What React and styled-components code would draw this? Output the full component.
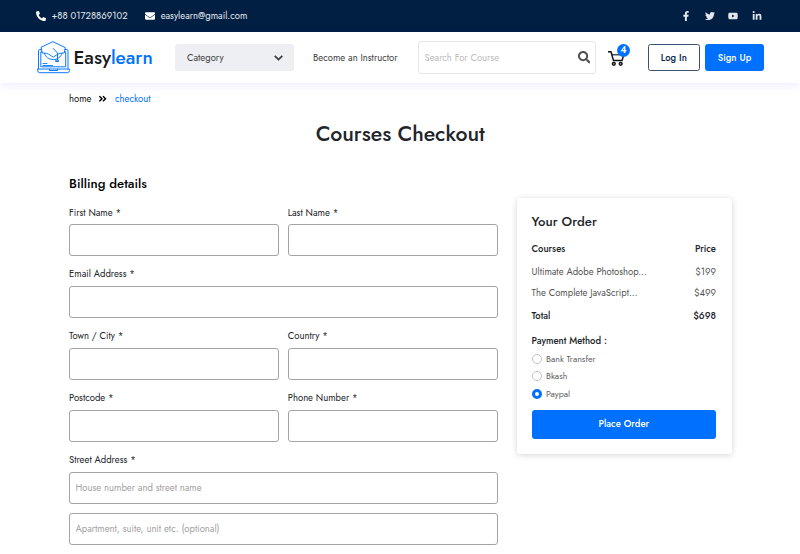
import React from 'react';
import styled, { createGlobalStyle } from 'styled-components';
import {
  FaPhoneAlt,
  FaEnvelope,
  FaFacebookF,
  FaTwitter,
  FaYoutube,
  FaLinkedinIn,
  FaAngleDoubleRight,
  FaSearch,
} from 'react-icons/fa';

const GlobalStyle = createGlobalStyle`
  * { box-sizing: border-box; }
  body {
    margin: 0;
    background: #fff;
    color: #212529;
    font: 400 9.5px/14px Jost, Lato, sans-serif;
    overflow: hidden;
  }
  input, button { font: inherit; }
`;

const Text = styled.span`
  white-space: nowrap;
`;

const TopBar = styled.div`
  height: 32px;
  padding: 0 38.5px 0 36px;
  background: #001f43;
  color: #e3e7ec;
  display: flex;
  align-items: center;
  justify-content: space-between;
`;

const Contacts = styled.div`
  display: flex;
  gap: 17.5px;
`;

const Contact = styled.div`
  display: flex;
  align-items: center;
  gap: 5.5px;
  svg { font-size: 10px; color: #fff; }
`;

const Socials = styled.div`
  display: flex;
  align-items: center;
  gap: 13.5px;
  font-size: 10px;
  svg { display: block; }
`;

const Navbar = styled.header`
  height: 51px;
  padding: 0 36px 0 37px;
  background: #fff;
  box-shadow: 0 3px 9px rgba(70, 90, 240, 0.09);
  display: flex;
  align-items: center;
`;

const Brand = styled.div`
  width: 138px;
  display: flex;
  align-items: center;
  gap: 3.5px;
  color: #17191c;
  font-size: 19px;
  font-weight: 500;
  line-height: 26px;
`;

const BrandName = styled.span`
  display: flex;
`;

const BrandAccent = styled(Text)`
  color: #0071ff;
`;

const CategorySelect = styled.div`
  width: 118.5px;
  height: 26.5px;
  padding: 0 11px 0 12px;
  border-radius: 2.5px;
  background: #eeeff3;
  color: #444;
  display: flex;
  align-items: center;
  justify-content: space-between;
`;

const NavLink = styled.a`
  width: 105px;
  margin-left: 19.5px;
  color: #3f3f3f;
  white-space: nowrap;
`;

const SearchBox = styled.div`
  width: 178px;
  height: 33px;
  padding: 0 5px 0 5.5px;
  border: 1px solid #e6e6e6;
  border-radius: 3px;
  display: flex;
  align-items: center;
  svg { font-size: 12.5px; color: #505050; }
`;

const SearchInput = styled.input`
  flex: 1;
  min-width: 0;
  padding: 0;
  border: 0;
  outline: 0;
  &::placeholder { color: #bcbcbc; }
`;

const CartButton = styled.div`
  position: relative;
  width: 22px;
  height: 24px;
  margin: 0 18px 0 12px;
  padding-top: 4px;
  svg { display: block; }
`;

const CartBadge = styled.span`
  position: absolute;
  top: -2px;
  right: 0;
  width: 13px;
  height: 13px;
  border-radius: 50%;
  background: #0071ff;
  color: #fff;
  font-size: 9.5px;
  font-weight: 600;
  line-height: 13px;
  text-align: center;
`;

const Button = styled.button`
  width: ${(p) => p.$width || '100%'};
  height: ${(p) => p.$height || '27.5px'};
  padding: 0;
  border: 1px solid ${(p) => (p.$outline ? '#3a5270' : '#0071ff')};
  border-radius: 2.5px;
  background: ${(p) => (p.$outline ? '#fff' : '#0071ff')};
  color: ${(p) => (p.$outline ? '#0b2849' : '#fff')};
  font-weight: 500;
`;

const AuthButtons = styled.div`
  display: flex;
  gap: 5.5px;
`;

const Page = styled.main`
  padding: 9px 68.5px 0 69px;
`;

const Breadcrumb = styled.nav`
  display: flex;
  align-items: center;
  color: #111;
  svg { margin: 0 7px; font-size: 9.5px; color: #000; }
`;

const Crumb = styled(Text)`
  color: ${(p) => (p.$active ? '#0071ff' : 'inherit')};
`;

const Title = styled.h1`
  margin: 13px 0 0;
  font-size: 21.3px;
  font-weight: 500;
  line-height: 30px;
  letter-spacing: -0.04px;
  text-align: center;
`;

const Columns = styled.div`
  margin-top: 25px;
  display: flex;
  align-items: flex-start;
  gap: 18.5px;
`;

const Form = styled.form`
  width: 429px;
`;

const Heading = styled.h2`
  margin: 0;
  font-size: 13.2px;
  font-weight: 500;
  line-height: 20px;
  color: #000;
`;

const OrderTitle = styled(Heading)`
  color: #212529;
`;

const FieldGrid = styled.div`
  margin-top: 11.5px;
  display: grid;
  grid-template-columns: 1fr 1fr;
  column-gap: 8.5px;
  row-gap: 11.1px;
`;

const Field = styled.label`
  grid-column: ${(p) => (p.$wide ? 'span 2' : 'auto')};
  display: flex;
  flex-direction: column;
`;

const Input = styled.input`
  height: 32px;
  margin-top: ${(p) => p.$gap || '4.8px'};
  padding: 0 5.5px;
  border: 1px solid #a3a3a3;
  border-radius: 3px;
  background: #fff;
  outline: 0;
  &::placeholder { color: #a2a2a2; }
`;

const OrderCard = styled.aside`
  width: 215px;
  height: 256px;
  margin-top: 24.3px;
  padding: 13.8px 15.5px 0 15px;
  border-radius: 3px;
  background: #fff;
  box-shadow: 0 1px 6px rgba(0, 0, 0, 0.17);
`;

const OrderRow = styled.div`
  height: ${(p) => p.$height}px;
  display: flex;
  align-items: center;
  justify-content: space-between;
  font-weight: ${(p) => (p.$strong ? 500 : 400)};
  color: ${(p) => (p.$strong ? '#212529' : '#555')};
`;

const PaymentTitle = styled.div`
  margin: 10px 0 2.3px;
  font-weight: 500;
  line-height: 14px;
`;

const Option = styled.label`
  height: 17.3px;
  display: flex;
  align-items: center;
  gap: 4.5px;
  color: #626262;
  font-size: 8.9px;
`;

const Radio = styled.input.attrs({ type: 'radio', name: 'payment' })`
  appearance: none;
  width: 10px;
  height: 10px;
  margin: 0;
  border: 1px solid #c4c4c4;
  border-radius: 50%;
  background: #fff;
  &:checked { border: 3px solid #0071ff; }
`;

const Submit = styled.div`
  margin-top: 7.4px;
`;

const LogoMark = () => (
  <svg width="33" height="33" viewBox="0 0 33 33" fill="none" stroke="#0b78ff" strokeWidth="1" strokeLinejoin="round" strokeLinecap="round">
    <path d="M4.200 8.500H2.800a1.300 1.300 0 0 0-1.300 1.300v18M28 8.500h1.700a1.300 1.300 0 0 1 1.300 1.300v18" />
    <path d="M5 10.800H3.800v15h24.900v-15h-1.200" />
    <path d="M.6 28h31.800v1.600a2.100 2.100 0 0 1-2.100 2.100H2.700A2.100 2.100 0 0 1 .6 29.600Z" />
    <path d="M12.500 28.200v1.300h8v-1.300" />
    <path d="M16.200.8 28.400 6.700 27.200 12c-3.300-.1-5.800.5-8 2.200l-3 2-3-2c-2.200-1.700-4.700-2.300-8-2.200L4.100 6.700Z" />
    <path d="M7.500 12.500c1 3.600 4.200 6 8.700 6s7.700-2.400 8.700-6" />
    <path d="M16.200 7.500 20.500 12v7M19 20.500h2.500v-1.300H19Z" />
    <path d="M6 22.500h4M6 24.500h9.500" strokeWidth="0.9" />
  </svg>
);

const CartIcon = () => (
  <svg width="17" height="17" viewBox="0 0 17 17" fill="none" stroke="#111" strokeWidth="1.500" strokeLinejoin="round">
    <path d="M0 1.800h3l2.500 8.800h8.500l2-6.400" />
    <path d="M4 4.800h11.500" strokeWidth="1.100" />
    <circle cx="5.800" cy="13.800" r="1.400" />
    <circle cx="12.700" cy="13.800" r="1.400" />
  </svg>
);

const Chevron = () => (
  <svg width="9" height="6" viewBox="0 0 9 6" fill="none" stroke="#3c3c3c" strokeWidth="1.700">
    <path d="M.7.8 4.500 4.500 8.300.8" />
  </svg>
);

const fields = [
  { label: 'First Name *' },
  { label: 'Last Name *' },
  { label: 'Email Address *', wide: true },
  { label: 'Town / City *' },
  { label: 'Country *' },
  { label: 'Postcode *' },
  { label: 'Phone Number *' },
];

const methods = ['Bank Transfer', 'Bkash', 'Paypal'];

export default function App() {
  return (
    <>
      <GlobalStyle />
      <TopBar>
        <Contacts>
          <Contact><FaPhoneAlt /><Text>+88 01728869102</Text></Contact>
          <Contact><FaEnvelope /><Text>easylearn@gmail.com</Text></Contact>
        </Contacts>
        <Socials><FaFacebookF /><FaTwitter /><FaYoutube /><FaLinkedinIn /></Socials>
      </TopBar>
      <Navbar>
        <Brand>
          <LogoMark />
          <BrandName>
            <Text>Easy</Text>
            <BrandAccent>learn</BrandAccent>
          </BrandName>
        </Brand>
        <CategorySelect><Text>Category</Text><Chevron /></CategorySelect>
        <NavLink>Become an Instructor</NavLink>
        <SearchBox><SearchInput placeholder="Search For Course" /><FaSearch /></SearchBox>
        <CartButton><CartIcon /><CartBadge>4</CartBadge></CartButton>
        <AuthButtons>
          <Button $outline $width="51.5px">Log In</Button>
          <Button $width="59px">Sign Up</Button>
        </AuthButtons>
      </Navbar>
      <Page>
        <Breadcrumb>
          <Crumb>home</Crumb>
          <FaAngleDoubleRight />
          <Crumb $active>checkout</Crumb>
        </Breadcrumb>
        <Title>Courses Checkout</Title>
        <Columns>
          <Form>
            <Heading>Billing details</Heading>
            <FieldGrid>
              {fields.map((f) => (
                <Field key={f.label} $wide={f.wide}>{f.label}<Input /></Field>
              ))}
              <Field $wide>
                Street Address *
                <Input placeholder="House number and street name" />
                <Input $gap="9.5px" placeholder="Apartment, suite, unit etc. (optional)" />
              </Field>
            </FieldGrid>
          </Form>
          <OrderCard>
            <OrderTitle>Your Order</OrderTitle>
            <OrderRow $strong $height={34}><Text>Courses</Text><Text>Price</Text></OrderRow>
            <OrderRow $height={12}><Text>Ultimate Adobe Photoshop...</Text><Text>$199</Text></OrderRow>
            <OrderRow $height={29}><Text>The Complete JavaScript...</Text><Text>$499</Text></OrderRow>
            <OrderRow $strong $height={17}><Text>Total</Text><Text>$698</Text></OrderRow>
            <PaymentTitle>Payment Method :</PaymentTitle>
            {methods.map((name) => (
              <Option key={name}>
                <Radio defaultChecked={name === 'Paypal'} />
                <Text>{name}</Text>
              </Option>
            ))}
            <Submit><Button type="button" $height="29.5px">Place Order</Button></Submit>
          </OrderCard>
        </Columns>
      </Page>
    </>
  );
}
